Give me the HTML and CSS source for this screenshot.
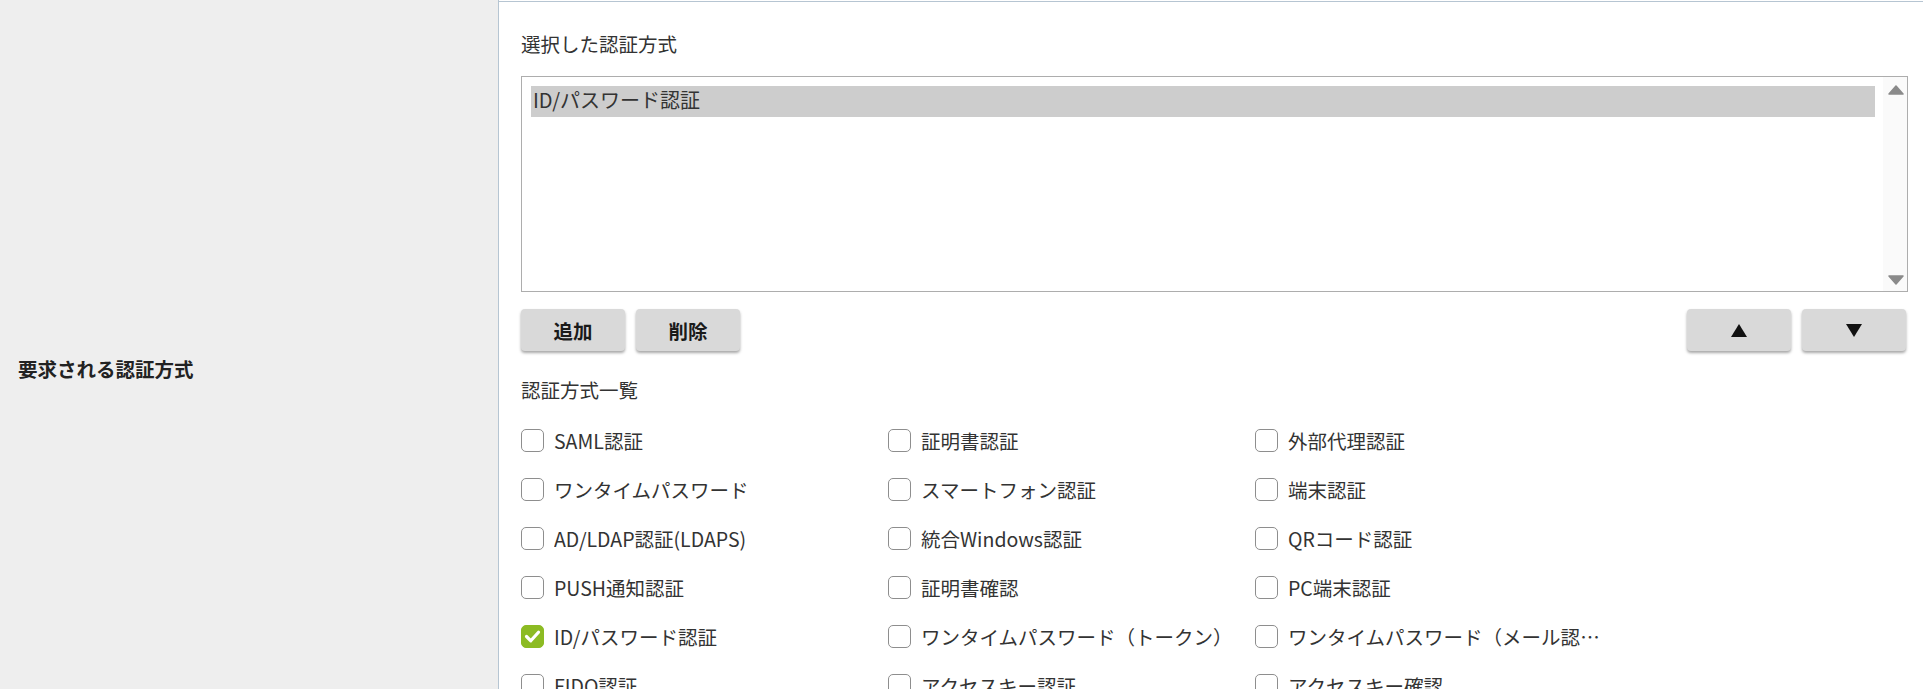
FILE: index.html
```html
<!DOCTYPE html>
<html lang="ja">
<head>
<meta charset="utf-8">
<title>要求される認証方式</title>
<link rel="stylesheet" href="styles.css">
</head>
<body>
<div class="table">
  <div class="row prev"><div class="th"></div><div class="td"></div></div>
  <div class="row main">
    <div class="th"><span class="th-label">要求される認証方式</span></div>
    <div class="td">
      <div class="section-title">選択した認証方式</div>
      <div class="listbox">
        <div class="list-items">
          <div class="list-item selected">ID/パスワード認証</div>
        </div>
        <div class="scrollbar">
          <svg class="sb-arrow" width="16" height="10" viewBox="0 0 16 10"><path d="M8 1 L15 9 L1 9 Z" fill="#8a8a8a" stroke="#8a8a8a" stroke-width="1.5" stroke-linejoin="round"/></svg>
          <svg class="sb-arrow" width="16" height="10" viewBox="0 0 16 10"><path d="M1 1 L15 1 L8 9 Z" fill="#8a8a8a" stroke="#8a8a8a" stroke-width="1.5" stroke-linejoin="round"/></svg>
        </div>
      </div>
      <div class="toolbar">
        <div class="btn-group">
          <button class="btn">追加</button>
          <button class="btn">削除</button>
        </div>
        <div class="btn-group right">
          <button class="btn"><svg width="16" height="13" viewBox="0 0 16 13"><path d="M8 0 L16 13 L0 13 Z" fill="#111"/></svg></button>
          <button class="btn"><svg width="16" height="13" viewBox="0 0 16 13"><path d="M0 0 L16 0 L8 13 Z" fill="#111"/></svg></button>
        </div>
      </div>
      <div class="section-title list-title">認証方式一覧</div>
      <div class="check-grid">
        <label class="check"><span class="box"></span><span class="text">SAML認証</span></label>
        <label class="check"><span class="box"></span><span class="text">証明書認証</span></label>
        <label class="check"><span class="box"></span><span class="text">外部代理認証</span></label>

        <label class="check"><span class="box"></span><span class="text">ワンタイムパスワード</span></label>
        <label class="check"><span class="box"></span><span class="text">スマートフォン認証</span></label>
        <label class="check"><span class="box"></span><span class="text">端末認証</span></label>

        <label class="check"><span class="box"></span><span class="text">AD/LDAP認証(LDAPS)</span></label>
        <label class="check"><span class="box"></span><span class="text">統合Windows認証</span></label>
        <label class="check"><span class="box"></span><span class="text">QRコード認証</span></label>

        <label class="check"><span class="box"></span><span class="text">PUSH通知認証</span></label>
        <label class="check"><span class="box"></span><span class="text">証明書確認</span></label>
        <label class="check"><span class="box"></span><span class="text">PC端末認証</span></label>

        <label class="check"><span class="box checked"><svg width="23" height="23" viewBox="0 0 23 23"><path d="M5.5 11.5 L9.8 15.8 L17.5 7.2" fill="none" stroke="#fff" stroke-width="3.2" stroke-linecap="round" stroke-linejoin="round"/></svg></span><span class="text">ID/パスワード認証</span></label>
        <label class="check"><span class="box"></span><span class="text">ワンタイムパスワード（トークン）</span></label>
        <label class="check"><span class="box"></span><span class="text">ワンタイムパスワード（メール認証）</span></label>

        <label class="check"><span class="box"></span><span class="text">FIDO認証</span></label>
        <label class="check"><span class="box"></span><span class="text">アクセスキー認証</span></label>
        <label class="check"><span class="box"></span><span class="text">アクセスキー確認</span></label>
      </div>
    </div>
  </div>
</div>
</body>
</html>
```

FILE: styles.css
```css
html, body {
  margin: 0;
  padding: 0;
  background: #ffffff;
}

body {
  font-family: "Noto Sans CJK JP", "Noto Sans", sans-serif;
  font-size: 19.5px;
  color: #333333;
}

.table {
  width: 100%;
}

.row {
  display: grid;
  grid-template-columns: 499px 1fr;
}

.row.prev {
  height: 1px;
}

.row.main {
  border-top: 1px solid #b6c5d2;
}

.th {
  box-sizing: border-box;
  background: #eeeeee;
  border-right: 1px solid #b6c5d2;
  display: flex;
  align-items: center;
  padding-left: 18px;
}

.th-label {
  font-weight: bold;
  color: #222222;
  line-height: 28px;
}

.td {
  padding: 28px 15px 26px 22px;
  min-width: 0;
}

.section-title {
  line-height: 28px;
  height: 28px;
  color: #333333;
}

.listbox {
  margin-top: 18px;
  height: 216px;
  box-sizing: border-box;
  border: 1px solid #adadad;
  display: flex;
  background: #ffffff;
}

.list-items {
  flex: 1;
  padding: 9px 8px 9px 9px;
}

.list-item {
  box-sizing: border-box;
  height: 31px;
  line-height: 28px;
  padding: 0 0 3px 2px;
  font-size: 20px;
  color: #333333;
}

.list-item.selected {
  background: #cdcdcd;
}

.scrollbar {
  width: 24px;
  background: #fafafa;
  display: flex;
  flex-direction: column;
  justify-content: space-between;
  align-items: center;
  padding: 8px 0 6px;
  box-sizing: border-box;
}

.sb-arrow {
  display: block;
  margin-left: 2px;
}

.toolbar {
  margin-top: 17px;
  display: flex;
  justify-content: space-between;
}

.btn-group {
  display: flex;
  gap: 11px;
}

.btn-group.right {
  margin-right: 2px;
}

.btn {
  width: 104px;
  height: 42px;
  border: none;
  border-radius: 4px;
  background: #d9d9d9;
  box-shadow: 0 2px 3px rgba(0, 0, 0, 0.35);
  font-family: "Noto Sans CJK JP", "Noto Sans", sans-serif;
  font-size: 19.5px;
  font-weight: bold;
  color: #1a1a1a;
  display: flex;
  align-items: center;
  justify-content: center;
  padding: 0;
  cursor: pointer;
}

.list-title {
  margin-top: 25px;
}

.check-grid {
  margin-top: 12px;
  display: grid;
  grid-template-columns: repeat(3, 367px);
  grid-auto-rows: 49px;
}

.check {
  display: flex;
  align-items: center;
  gap: 10px;
  min-width: 0;
}

.box {
  flex: none;
  box-sizing: border-box;
  width: 23px;
  height: 23px;
  border: 1.5px solid #8e8e8e;
  border-radius: 5px;
  background: #ffffff;
  display: flex;
  align-items: center;
  justify-content: center;
}

.box.checked {
  background: #8cbb23;
  border-color: #8cbb23;
}

.box.checked svg {
  display: block;
  flex: none;
}

.text {
  white-space: nowrap;
  overflow: hidden;
  text-overflow: ellipsis;
  max-width: 325px;
  line-height: 28px;
  color: #333333;
}
```
